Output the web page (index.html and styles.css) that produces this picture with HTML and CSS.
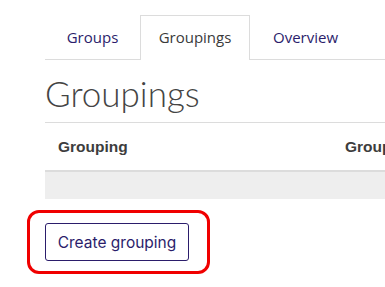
FILE: index.html
```
<!DOCTYPE html>
<html lang="en">
  <head>
    <meta charset="UTF-8" />
    <title>Groupings</title>
    <link rel="stylesheet" href="styles.css">
  </head>
  <body>
    <div class="page">
      <nav class="tabs">
        <a class="tab" href="#">Groups</a>
        <a class="tab active" href="#">Groupings</a>
        <a class="tab" href="#">Overview</a>
      </nav>
      <h2 class="title">Groupings</h2>
      <table class="groupings">
        <thead>
          <tr>
            <th class="col-name">Grouping</th>
            <th>Groups</th>
          </tr>
        </thead>
        <tbody>
          <tr><td></td><td></td></tr>
        </tbody>
      </table>
    </div>
    <div class="highlight">
      <button type="button" class="btn">Create grouping</button>
    </div>
  </body>
</html>
```

FILE: styles.css
```
body {
  margin: 0;
  overflow: hidden;
  background: #fff;
}

.page {
  padding: 15px 0 0 45px;
  width: 400px;
}

.tabs {
  display: flex;
  height: 44px;
  border-bottom: 1px solid #dcdcdc;
}

.tab {
  box-sizing: border-box;
  width: 95px;
  padding-top: 11px;
  text-align: center;
  font-family: "Open Sans", sans-serif;
  font-size: 15px;
  color: #2b1d6b;
  text-decoration: none;
  border: 1px solid transparent;
  border-bottom: none;
}

.tab.active {
  width: 110px;
  color: #3a3a3a;
  background: #fff;
  border-color: #dcdcdc;
  margin-bottom: -1px;
}

.tab:last-child {
  width: 111px;
}

.title {
  margin: 0;
  height: 63px;
  padding-top: 13px;
  box-sizing: border-box;
  font-family: Lato, sans-serif;
  font-weight: 300;
  font-size: 35px;
  line-height: 40px;
  color: #444;
  border-bottom: 1px solid #dcdcdc;
}

.groupings {
  width: 100%;
  border-collapse: collapse;
  font-family: "Liberation Sans", Arial, sans-serif;
}

.groupings th {
  height: 47px;
  padding: 0 0 0 13px;
  text-align: left;
  font-size: 15.5px;
  color: #3d3d3d;
  border-bottom: 2px solid #dcdcdc;
}

.groupings .col-name {
  width: 274px;
}

.groupings td {
  height: 25px;
  background: #eeeeee;
}

.highlight {
  display: inline-block;
  margin: 11px 0 0 27px;
  padding: 10px 18px 10px 15px;
  border: 3px solid #f00000;
  border-radius: 12px;
}

.btn {
  display: block;
  width: 144px;
  height: 38px;
  padding: 0;
  font-family: Inter, sans-serif;
  font-size: 15.5px;
  color: #2b1d6b;
  background: #fff;
  border: 1px solid #2b1d6b;
  border-radius: 3px;
  cursor: pointer;
}
```
